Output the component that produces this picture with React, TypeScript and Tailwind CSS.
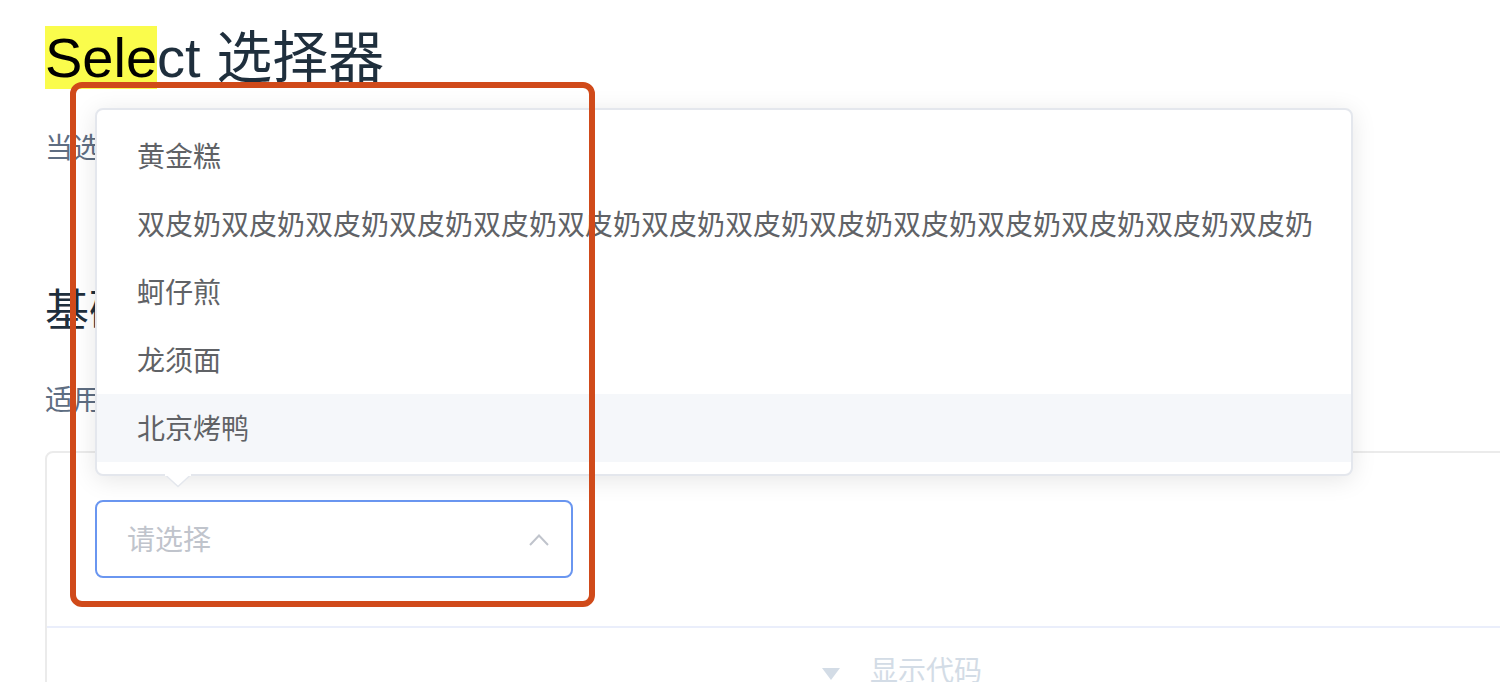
import React from "react";

const FONT = '"Liberation Sans", "Noto Sans CJK SC", sans-serif';

const items = [
  "黄金糕",
  "双皮奶双皮奶双皮奶双皮奶双皮奶双皮奶双皮奶双皮奶双皮奶双皮奶双皮奶双皮奶双皮奶双皮奶",
  "蚵仔煎",
  "龙须面",
  "北京烤鸭",
];

export default function App() {
  return (
    <div
      className="relative w-[1500px] h-[682px] overflow-hidden bg-white"
      style={{ fontFamily: FONT }}
    >
      <div className="pl-[45px] pt-[26px]">
        <h2 className="text-[56px] leading-[64px] text-[#1f2f3d] whitespace-nowrap">
          <mark className="bg-[#fafc4c] text-black">Sele</mark>ct 选择器
        </h2>
        <p className="mt-[38px] text-[28px] leading-[42px] text-[#5e6d82] whitespace-nowrap">
          当选项过多时，使用下拉菜单展示并选择内容。
        </p>
        <h3 className="mt-[111px] text-[44px] leading-[60px] text-[#1f2f3d] whitespace-nowrap">
          基础用法
        </h3>
        <p className="mt-[39px] text-[28px] leading-[42px] text-[#5e6d82] whitespace-nowrap">
          适用广泛的基础单选
        </p>
        <div className="mt-[29px] w-[1714px] border-2 border-[#ebebeb] rounded-[8px]">
          <div className="px-[48px] pt-[47px] pb-[48px]">
            <div className="w-[478px] h-[78px] border-2 border-[#6a96f0] rounded-[8px] flex items-center justify-between pl-[30px] pr-[22px]">
              <span className="text-[28px] text-[#c0c4cc] pt-[4px]">请选择</span>
              <svg width="20" height="12" viewBox="0 0 20 12" fill="none" className="mt-[2px]">
                <path d="M1 11 L10 1.5 L19 11" stroke="#c0c4cc" strokeWidth="2" />
              </svg>
            </div>
          </div>
          <div className="border-t-2 border-[#eaeefb] h-[88px] flex items-center justify-center gap-[30px]">
            <svg width="18" height="12" viewBox="0 0 18 12" className="mt-[6px]">
              <path d="M0 0 L18 0 L9 12 Z" fill="#d3dce6" />
            </svg>
            <span className="text-[28px] text-[#d3dce6] pt-[2px]">显示代码</span>
          </div>
        </div>
      </div>

      {/* Dropdown popper */}
      <div className="absolute left-[95px] top-[108px] w-[1258px] bg-white border-2 border-[#e4e7ed] rounded-[8px] shadow-[0_4px_24px_rgba(0,0,0,0.1)] pt-[12px] pb-[12px]">
        {items.map((t, i) => (
          <div
            key={i}
            className={`h-[68px] pt-[4px] leading-[64px] px-[40px] text-[28px] text-[#606266] whitespace-nowrap ${
              i === 4 ? "bg-[#f5f7fa]" : ""
            }`}
          >
            {t}
          </div>
        ))}
      </div>
      <svg
        className="absolute left-[165px] top-[474px]"
        width="26"
        height="14"
        viewBox="0 0 26 14"
      >
        <path d="M0 1 L13 13 L26 1 Z" fill="#ffffff" />
        <path d="M1 1.5 L13 12.5 L25 1.5" stroke="#e4e7ed" strokeWidth="1.5" fill="none" />
        <rect x="0" y="0" width="26" height="2" fill="#ffffff" />
      </svg>

      {/* Annotation box */}
      <div className="absolute left-[70px] top-[82px] w-[525px] h-[525px] border-[6px] border-[#d04a1a] rounded-[12px]" />
    </div>
  );
}
